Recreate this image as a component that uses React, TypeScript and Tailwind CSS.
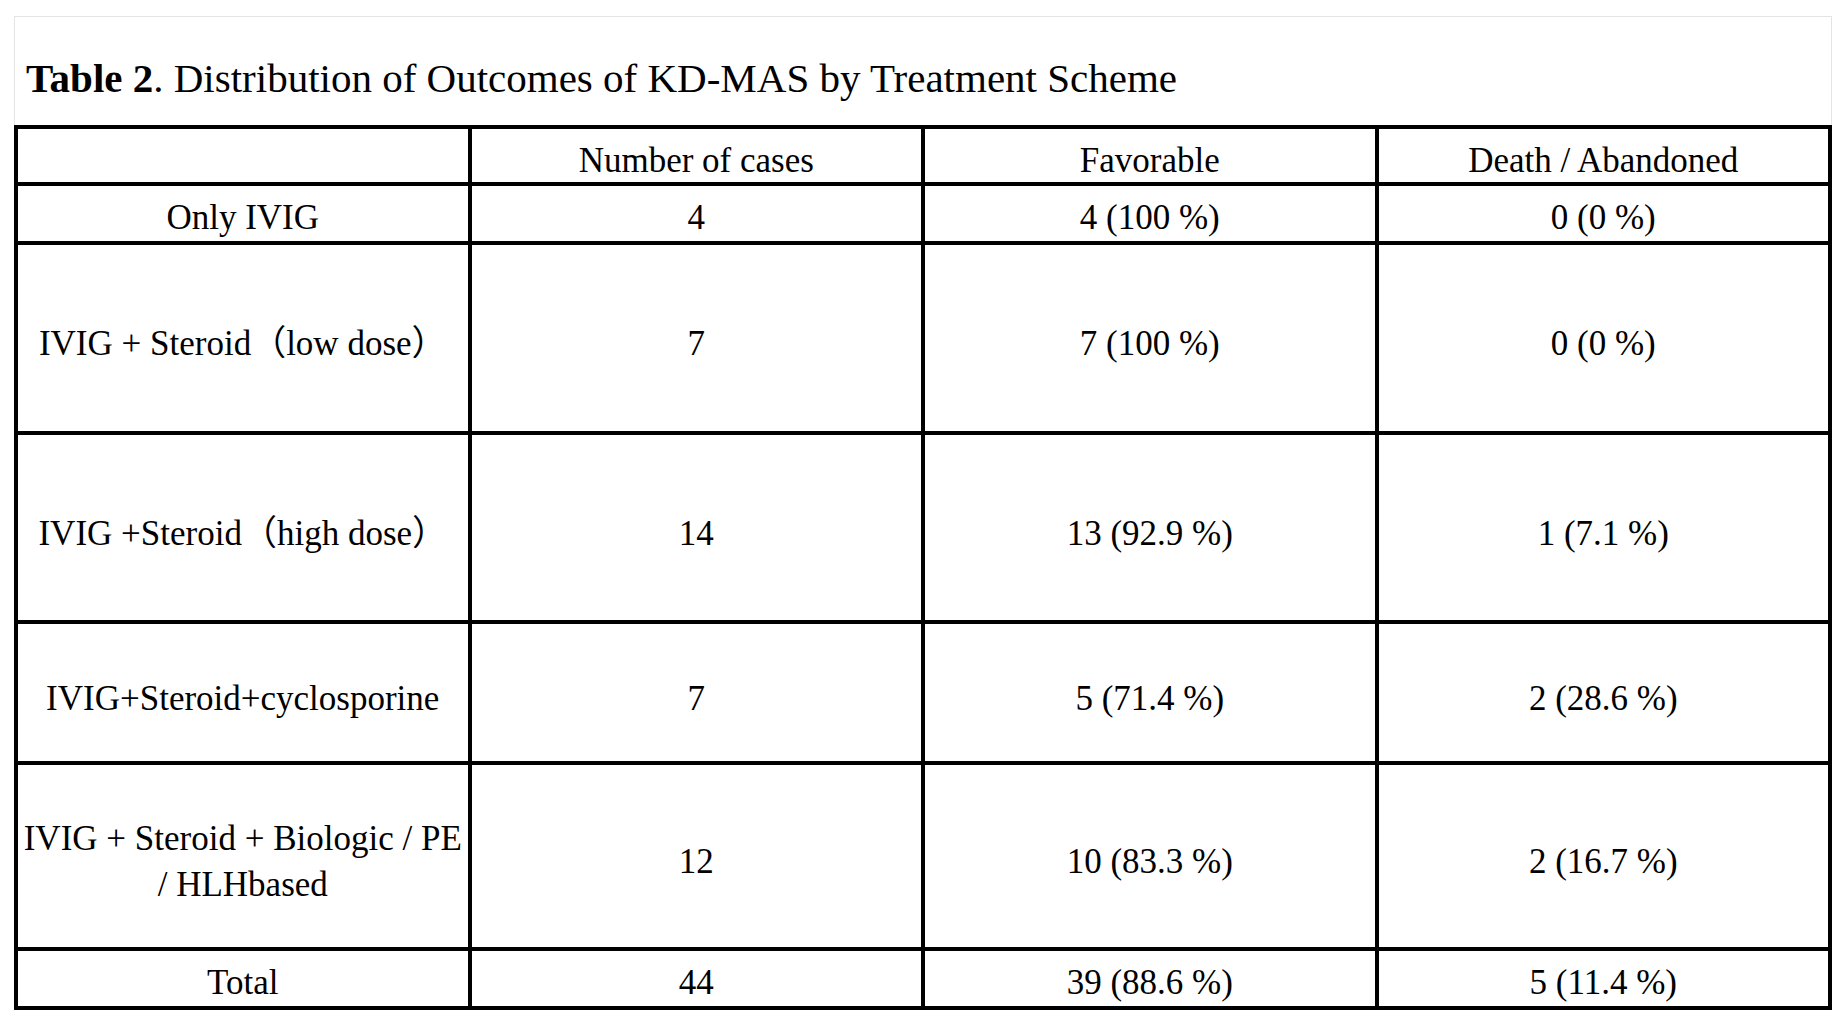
import React from 'react';

const rows: { label: React.ReactNode; cases: string; favorable: string; death: string; h: string; pad: string }[] = [
  { label: 'Only IVIG', cases: '4', favorable: '4 (100 %)', death: '0 (0 %)', h: 'h-[59px]', pad: 'pt-[8px]' },
  { label: 'IVIG + Steroid（low dose）', cases: '7', favorable: '7 (100 %)', death: '0 (0 %)', h: 'h-[190px]', pad: 'pt-[12px]' },
  { label: 'IVIG +Steroid（high dose）', cases: '14', favorable: '13 (92.9 %)', death: '1 (7.1 %)', h: 'h-[189px]', pad: 'pt-[12px]' },
  { label: 'IVIG+Steroid+cyclosporine', cases: '7', favorable: '5 (71.4 %)', death: '2 (28.6 %)', h: 'h-[141px]', pad: 'pt-[12px]' },
  {
    label: (
      <span className="leading-[46px]">
        IVIG + Steroid + Biologic / PE
        <br />/ HLHbased
      </span>
    ),
    cases: '12',
    favorable: '10 (83.3 %)',
    death: '2 (16.7 %)',
    h: 'h-[186px]',
    pad: 'pt-[12px]',
  },
  { label: 'Total', cases: '44', favorable: '39 (88.6 %)', death: '5 (11.4 %)', h: 'h-[59px]', pad: 'pt-[8px]' },
];

const cell = 'border-[4px] border-black pb-0';

export default function App() {
  return (
    <div className="w-full h-[1024px] bg-white pl-[14px] pt-[16px] text-black font-['Liberation_Serif','Noto_Sans_CJK_SC',serif]">
      <div className="w-[1818px]">
        {/* caption */}
        <div className="h-[109px] border-t border-x border-[#e4e4e4] pl-[11px] pt-[41px]">
          <p className="text-[41px] leading-[41px] whitespace-nowrap">
            <span className="font-bold">Table 2</span>. Distribution of Outcomes of KD-MAS by Treatment Scheme
          </p>
        </div>

        <table className="w-full table-fixed border-collapse border-[4px] border-black text-[35px] leading-[40px] text-center">
          <tbody>
            <tr className="h-[57px]">
              <td className={`${cell} pt-[10px]`}></td>
              <td className={`${cell} pt-[10px]`}>Number of cases</td>
              <td className={`${cell} pt-[10px]`}>Favorable</td>
              <td className={`${cell} pt-[10px]`}>Death / Abandoned</td>
            </tr>
            {rows.map((r, i) => (
              <tr key={i} className={r.h}>
                <td className={`${cell} ${r.pad} px-0 whitespace-nowrap`}>{r.label}</td>
                <td className={`${cell} ${r.pad}`}>{r.cases}</td>
                <td className={`${cell} ${r.pad}`}>{r.favorable}</td>
                <td className={`${cell} ${r.pad}`}>{r.death}</td>
              </tr>
            ))}
          </tbody>
        </table>
      </div>
    </div>
  );
}
